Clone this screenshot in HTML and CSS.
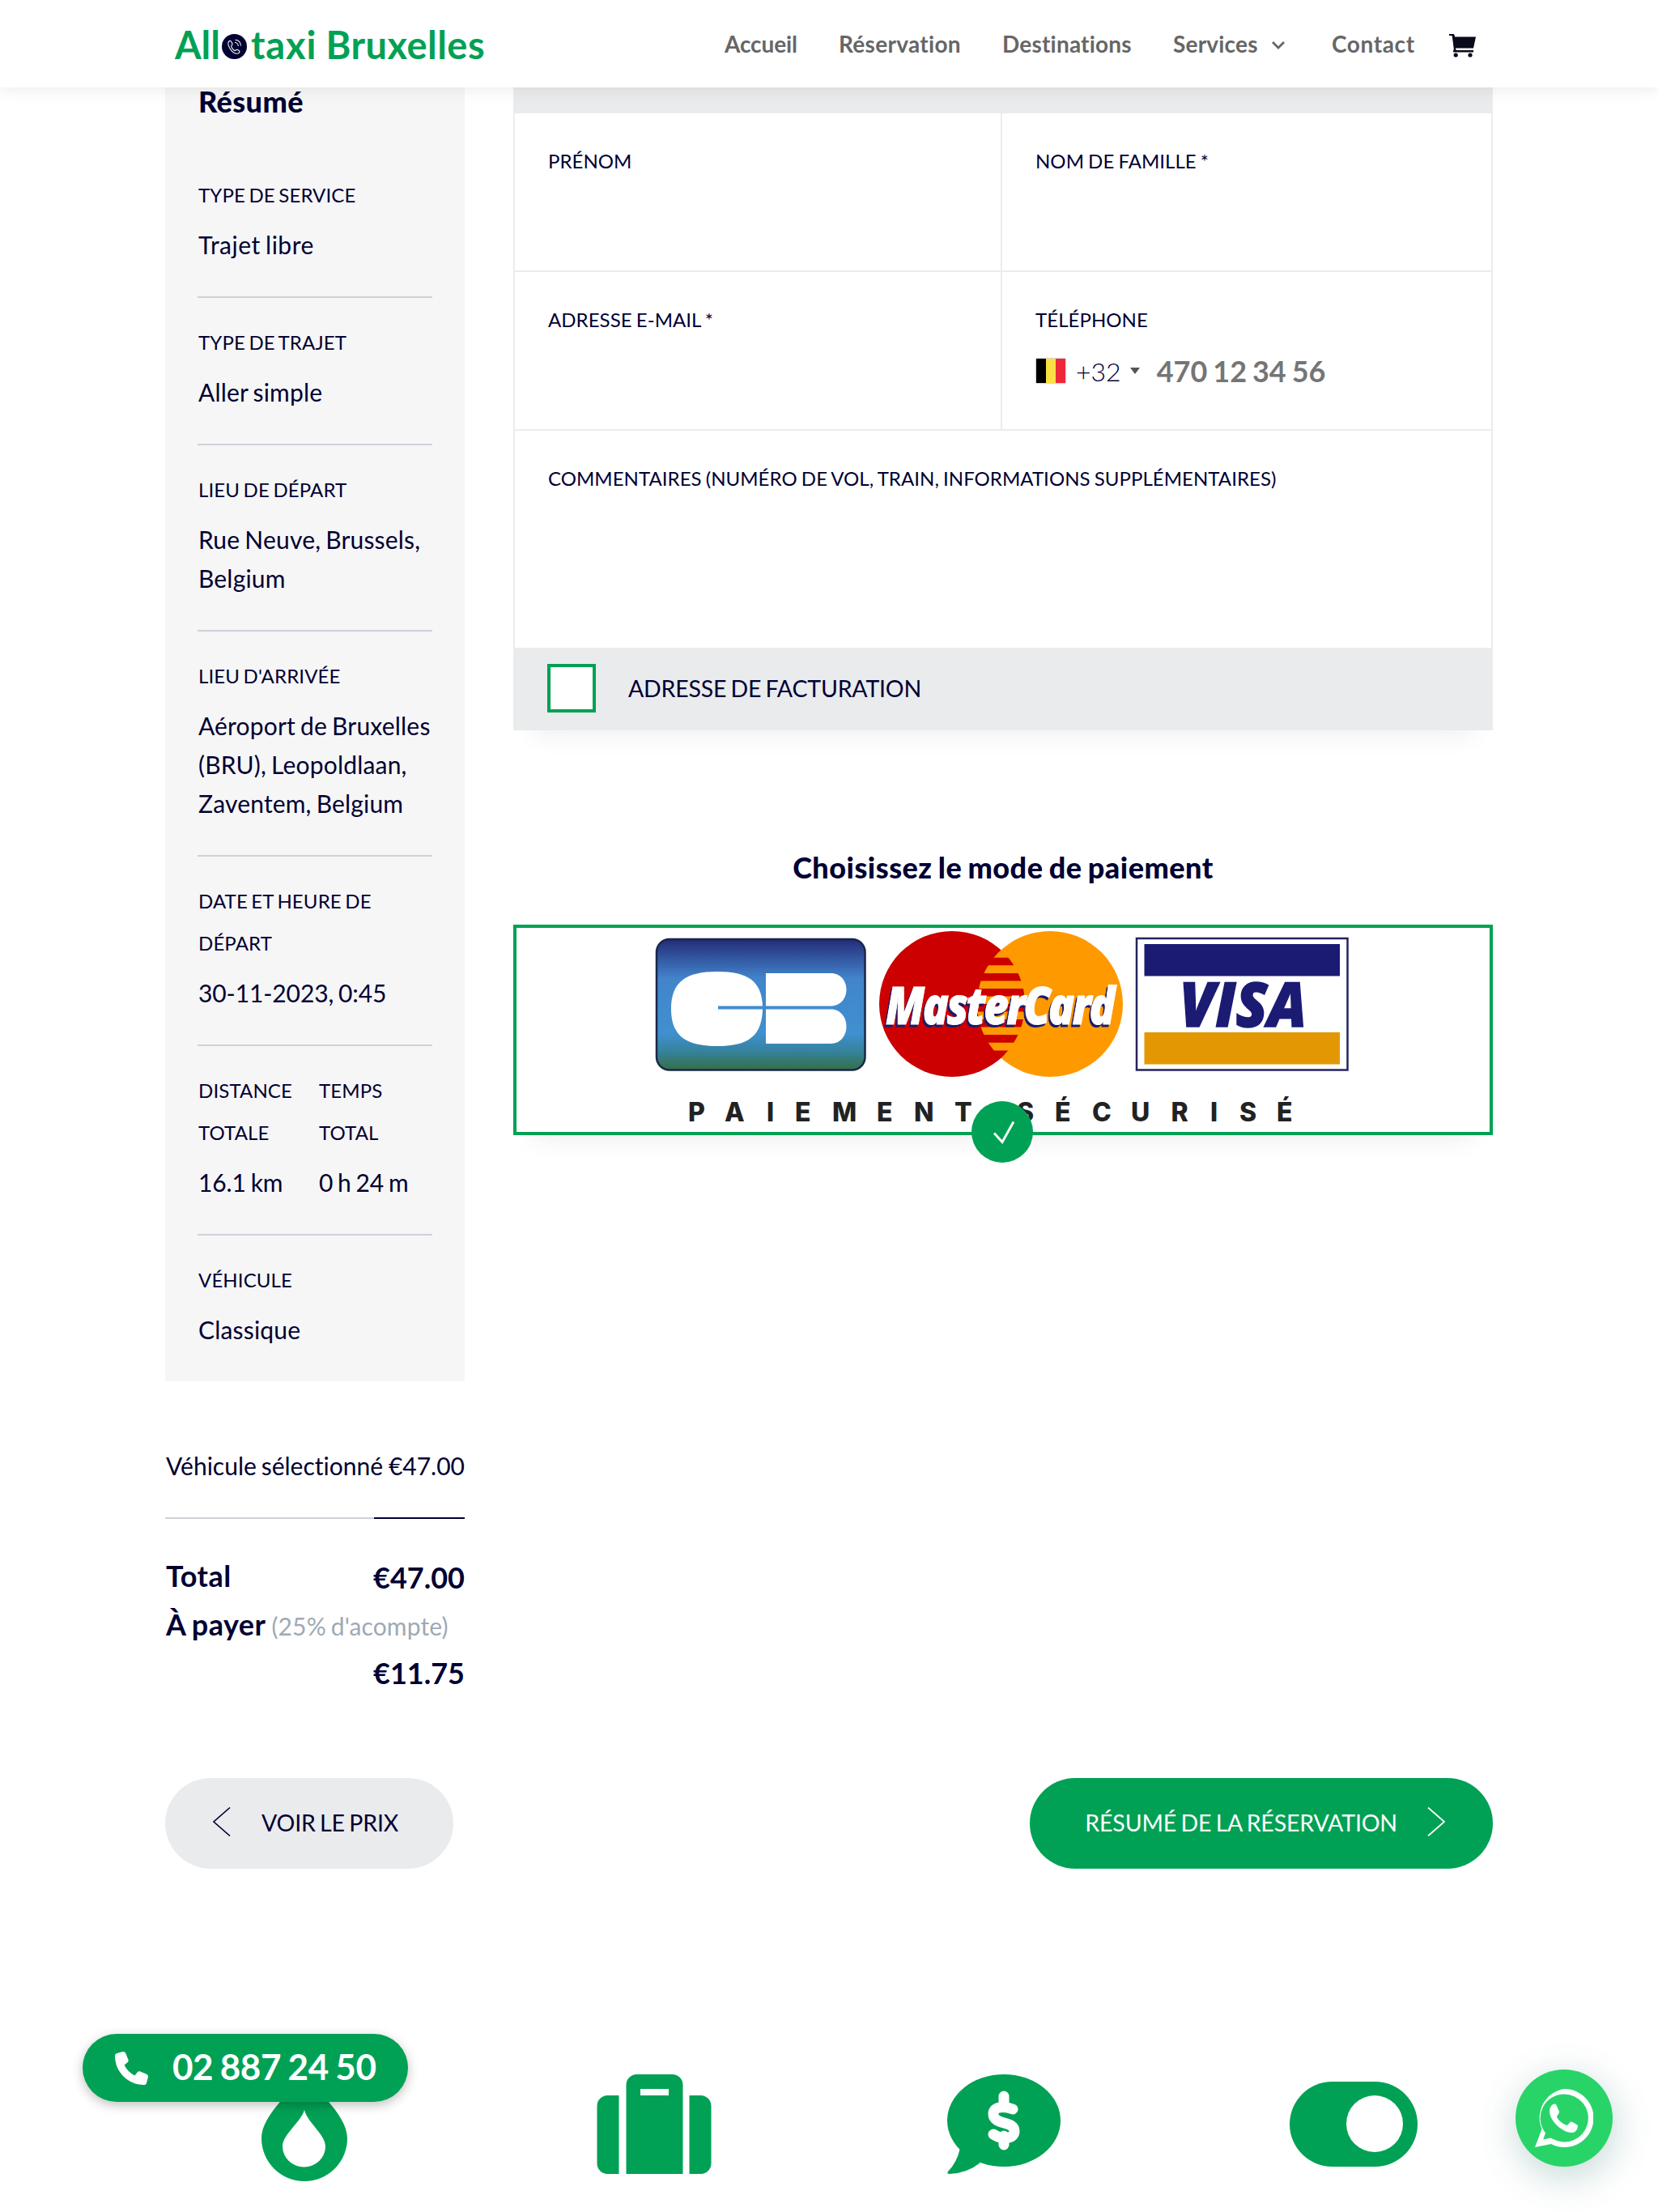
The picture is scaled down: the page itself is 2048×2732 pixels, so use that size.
FILE: index.html
```html
<!DOCTYPE html>
<html lang="fr">
<head>
<meta charset="utf-8">
<title>Allo taxi Bruxelles</title>
<link rel="stylesheet" href="styles.css">
</head>
<body>
<header class="topbar">
  <a class="logo"><span class="logo-all">All</span><svg class="logo-o" viewBox="0 0 31 31"><circle cx="15.500" cy="15.500" r="15.500" fill="#003"/><path d="M9.500 8.500c-2.200 1.300-2.200 4.500 0 8.500 2.500 4.300 6 7.200 9 7.200 2.200 0 3.700-1.400 3.400-2.600-.3-1.100-2.400-2.500-3.500-2.300-1 .2-1.500 1.600-2.500 1.300-1.600-.6-4-3.600-4.200-5.400-.1-1.200 1.200-1.500 1.300-2.500.1-1.400-1.800-5.100-3.500-4.200zM16 10.500c2.500 0 4.300 2 4.300 4.500M16.500 7.300c4 0 7 3.200 7 7.200" fill="none" stroke="#fff" stroke-width="1.100"/></svg><span class="logo-taxi">taxi</span><span class="logo-brux">Bruxelles</span></a>
  <nav class="nav">
    <a class="n1">Accueil</a>
    <a class="n2">Réservation</a>
    <a class="n3">Destinations</a>
    <a class="n4">Services</a>
    <svg class="caret" viewBox="0 0 18 12"><path d="M2 2l7 7 7-7" fill="none" stroke="#666" stroke-width="2.800"/></svg>
    <a class="n5">Contact</a>
    <svg class="cart" viewBox="0 0 34 30"><path d="M0 1h6l1.200 3.500H33L30 18.500H8l.6 2.500H30v2.600H4.800l1-4L3.800 4 3.200 3H0z" fill="#0a0a1c"/><circle cx="8.200" cy="27" r="2.600" fill="#0a0a1c"/><circle cx="26" cy="27" r="2.600" fill="#0a0a1c"/></svg>
  </nav>
</header>

<main class="booking">
  <aside class="side">
    <section class="summary">
      <h2 class="summary-title">Résumé</h2>
      <div class="item"><div class="label">TYPE DE SERVICE</div><div class="value loose">Trajet libre</div></div>
      <div class="item"><div class="label">TYPE DE TRAJET</div><div class="value">Aller simple</div></div>
      <div class="item"><div class="label">LIEU DE DÉPART</div><div class="value">Rue Neuve, Brussels,<br>Belgium</div></div>
      <div class="item"><div class="label">LIEU D'ARRIVÉE</div><div class="value">Aéroport de Bruxelles<br>(BRU), Leopoldlaan,<br>Zaventem, Belgium</div></div>
      <div class="item"><div class="label">DATE ET HEURE DE<br>DÉPART</div><div class="value digits">30-11-2023, 0:45</div></div>
      <div class="item pair">
        <div><div class="label">DISTANCE<br>TOTALE</div><div class="value digits">16.1 km</div></div>
        <div><div class="label">TEMPS<br>TOTAL</div><div class="value digits">0 h 24 m</div></div>
      </div>
      <div class="item"><div class="label">VÉHICULE</div><div class="value">Classique</div></div>
    </section>
    <section class="prices">
      <div class="price-row"><span>Véhicule sélectionné</span><span>€47.00</span></div>
      <div class="price-line"><i></i></div>
      <div class="total"><span class="name">Total</span><span class="sum">€47.00</span></div>
      <div class="due"><span class="name">À payer</span> <small>(25% d'acompte)</small></div>
      <div class="due-sum">€11.75</div>
    </section>
  </aside>

  <div class="content">
    <section class="form">
      <div class="form-head"></div>
      <div class="form-grid">
        <div class="cell"><label>PRÉNOM</label></div>
        <div class="cell"><label>NOM DE FAMILLE *</label></div>
        <div class="cell"><label>ADRESSE E-MAIL *</label></div>
        <div class="cell"><label>TÉLÉPHONE</label>
          <div class="phone">
            <svg class="flag" viewBox="0 0 36 30"><path d="M0 0h12v30H0z"/><path d="M12 0h12v30H12z" fill="#fae042"/><path d="M24 0h12v30H24z" fill="#ed2939"/></svg>
            <span class="dial">+32</span>
            <svg class="tri" viewBox="0 0 12 8"><path d="M0 0h12L6 8z" fill="#555"/></svg>
            <span class="number">470 12 34 56</span>
          </div>
        </div>
        <div class="cell wide"><label>COMMENTAIRES (NUMÉRO DE VOL, TRAIN, INFORMATIONS SUPPLÉMENTAIRES)</label></div>
      </div>
      <div class="billing"><i class="check"></i><span>ADRESSE DE FACTURATION</span></div>
    </section>

    <h3 class="pay-title">Choisissez le mode de paiement</h3>
    <div class="pay">
      <svg class="cards" viewBox="638 1146 1202 252">
        <defs>
          <linearGradient id="cb" x1="0" y1="0" x2="0" y2="1"><stop offset="0" stop-color="#232c78"/><stop offset=".3" stop-color="#4284cb"/><stop offset=".72" stop-color="#4090cf"/><stop offset=".86" stop-color="#35829c"/><stop offset="1" stop-color="#356f45"/></linearGradient>
          <clipPath id="lens"><circle cx="1176" cy="1240" r="90"/></clipPath>
        </defs>
        <rect x="811" y="1160" width="257.500" height="161.500" rx="16" fill="url(#cb)" stroke="#1a2748" stroke-width="2.500"/>
        <path d="M887 1242.500H942C941 1212 924 1200 886 1200S829 1212 829 1246s19 46 57 46 55-12 56-45.500H887z" fill="#fff"/>
        <path d="M946 1202h80c26 0 26 40.500 0 40.500H946zM946 1246.500h80c26 0 26 42.500 0 42.500H946z" fill="#fff"/>
        <circle cx="1176" cy="1240" r="90" fill="#c00"/>
        <circle cx="1297" cy="1240" r="90" fill="#f90"/>
        <g clip-path="url(#lens)" fill="#c00"><path d="M1222 1182.700h29l4 9.500h-35zM1214 1202h46l2 9.500h-51zM1209 1221h56v9.500h-57zM1208 1240h57v9.500h-57zM1209 1259h56v9.500h-55zM1214 1278h45l-3 9.700h-38zM1226 1297.500h20l-9 12z"/></g>
        <g class="mc"><text x="1092" y="1268" textLength="281" lengthAdjust="spacingAndGlyphs" fill="#1a1a6a" stroke="#1a1a6a">MasterCard</text><text x="1094" y="1265" textLength="281" lengthAdjust="spacingAndGlyphs" fill="#fff" stroke="#fff">MasterCard</text></g>
        <rect x="1404" y="1159" width="260.500" height="162.500" fill="#fff" stroke="#23235f" stroke-width="2.500"/>
        <path d="M1413.500 1166H1655v39.500h-241.500z" fill="#1b1b74"/><path d="M1413.500 1275H1655v39.500h-241.500z" fill="#e39803"/>
        <text class="visa" x="1457" y="1268" textLength="157" lengthAdjust="spacingAndGlyphs">VISA</text>
        <text class="secure" y="1385" x="850 895 947 982 1028 1083 1129 1179 1210 1256 1303 1349 1397 1446.500 1495 1531 1577">PAIEMENT SÉCURISÉ</text>
      </svg>
      <span class="tick"><svg viewBox="0 0 76 76"><path d="M28 39.500l10 11 14-25" fill="none" stroke="#fff" stroke-width="2.800"/></svg></span>
    </div>
  </div>
</main>

<div class="actions">
  <a class="btn back"><svg viewBox="0 0 22 36"><path d="M21 .5L1 18l20 17.500" fill="none" stroke="#003" stroke-width="1.600"/></svg><span>VOIR LE PRIX</span></a>
  <a class="btn next"><span>RÉSUMÉ DE LA RÉSERVATION</span><svg viewBox="0 0 22 36"><path d="M1 .5L21 18 1 35.500" fill="none" stroke="#fff" stroke-width="1.800"/></svg></a>
</div>

<section class="features">
  <svg viewBox="0 0 160 140"><path d="M80 1c8 22 53 54 53 85a53 53 0 0 1-106 0C27 55 72 23 80 1z"/><path d="M80 51c-5 16-27 30-27 45a26.500 25.500 0 0 0 53 0c0-15-22-29-26-45z" fill="#fff"/></svg>
  <svg viewBox="0 0 160 140"><path d="M46 33v97H32a13 13 0 0 1-13-13V46a13 13 0 0 1 13-13zM133 33h14a13 13 0 0 1 13 13v71a13 13 0 0 1-13 13h-14zM55 130V20A13 13 0 0 1 68 7h44a13 13 0 0 1 13 13v110z" transform="translate(-9.500 0)"/><path d="M63 25h35v8H63z" fill="#fff"/></svg>
  <svg viewBox="0 0 160 140"><ellipse cx="80" cy="64" rx="70" ry="57"/><path d="M26 98q-4 18-15 29-2 3 2 3 22-1 38-14z"/><path d="M80 34v11M80 83v11" fill="none" stroke="#fff" stroke-width="13" stroke-linecap="round"/><path d="M91 50c-8-3-24-5-24 6 0 14 26 8 26 21 0 11-17 10-26 4" fill="none" stroke="#fff" stroke-width="13" stroke-linecap="round"/></svg>
  <svg viewBox="0 0 160 140"><rect x="1" y="16" width="158" height="105" rx="52.500"/><circle cx="106" cy="68" r="35" fill="#fff"/></svg>
</section>

<a class="call"><svg viewBox="0 0 512 512"><path fill="#fff" d="M164.900 24.600c-7.700-18.600-28-28.500-47.400-23.200l-88 24C12.100 30.200 0 46 0 64c0 247.400 200.600 448 448 448 18 0 33.800-12.100 38.600-29.500l24-88c5.300-19.400-4.600-39.700-23.200-47.400l-96-40c-16.300-6.800-35.200-2.100-46.300 11.600L304.700 368C234.300 334.700 177.300 277.700 144 207.300L193.300 167c13.700-11.200 18.400-30 11.600-46.300l-40-96z"/></svg><span>02 887 24 50</span></a>
<a class="whatsapp"><svg viewBox="0 0 72 72"><path d="M36 0a36 36 0 1 1-16 68L0 72l8.500-22.500A36 36 0 0 1 36 0zm0 6.500A29.500 29.500 0 0 0 12 53l1 1.500-2.800 8 9.300-2 2 1A29.500 29.500 0 1 0 36 6.500z" fill="#fff" fill-rule="evenodd"/><path d="M26 19l4 9c.6 2-3 5-3 6.500 2 5 8 9 12.500 10.500 1.500 0 3.500-4.500 5-4.500 1.500 0 8 3.500 8.500 5 0 3-2 7.500-5.500 8.300-10 2.200-29-12-29.500-26 0-4 2-8 5-9 1-.3 2.500-.3 3 .2z" fill="#fff"/></svg></a>
</body>
</html>
```
FILE: styles.css
```css
* { box-sizing: border-box; }
body {
  margin: 0;
  width: 2048px;
  height: 2732px;
  overflow: hidden;
  position: relative;
  background: #fff;
  color: #003;
  font-family: Lato, "Liberation Sans", sans-serif;
  font-size: 30px;
  font-variant-ligatures: none;
  word-spacing: -.06em;
}
svg { display: block; flex: none; }
h2, h3 { margin: 0; }

.topbar {
  position: relative;
  z-index: 2;
  display: flex;
  justify-content: space-between;
  height: 108px;
  padding: 0 224px 0 216px;
  background: #fff;
  box-shadow: 0 0 20px rgba(0, 0, 0, .1);
}
.logo {
  display: flex;
  color: #00a154;
  font-size: 47px;
  font-weight: 700;
  line-height: 110px;
}
.logo-o { width: 31px; height: 31px; margin: 42px 5px 0 2px; }
.logo-taxi { letter-spacing: .9px; }
.logo-brux { margin-left: 11px; letter-spacing: .5px; }
.nav {
  display: flex;
  color: #666;
  font-size: 28px;
  font-weight: 700;
  line-height: 108px;
}
.n1 { width: 141px; letter-spacing: -.1px; }
.n2 { width: 202px; letter-spacing: .3px; }
.n3 { width: 211px; letter-spacing: .2px; }
.n4 { width: 121px; letter-spacing: .2px; }
.n5 { width: 102px; letter-spacing: .6px; }
.caret { width: 18px; height: 12px; margin: 50px 57px 0 0; }
.cart { width: 34px; height: 30px; margin: 41px 0 0 43px; }

.booking {
  display: flex;
  gap: 60px;
  width: 1640px;
  height: 2088px;
  margin-left: 204px;
}
.side { width: 370px; }
.summary { height: 1598px; padding: 0 40px; background: #f6f6f6; }
.summary-title {
  height: 78px;
  padding-left: 1px;
  font-size: 36px;
  font-weight: 900;
  line-height: 34px;
  letter-spacing: .4px;
}
.item { padding: 29px 0 40px; border-bottom: 2px solid #cdd2da; }
.item:last-child { border: 0; }
.label, .value { padding-left: 1px; }
.label { margin-bottom: 11px; font-size: 24px; line-height: 52px; letter-spacing: .13px; }
.value { line-height: 48px; letter-spacing: .18px; white-space: nowrap; }
.value.loose { letter-spacing: .5px; }
.value.digits { letter-spacing: -.1px; }
.pair { display: grid; grid-template-columns: 149px 1fr; }

.prices { padding-top: 78px; }
.price-row {
  display: flex;
  justify-content: space-between;
  padding-left: 1px;
  line-height: 52px;
  white-space: nowrap;
}
.price-line { margin-top: 38px; height: 2px; background: #cdd2da; }
.price-line i { display: block; width: 112px; height: 2px; margin-left: auto; background: #003; }
.total {
  display: flex;
  justify-content: space-between;
  margin-top: 40px;
  font-size: 36px;
  font-weight: 700;
  line-height: 60px;
}
.name { padding-left: 1px; letter-spacing: .5px; }
.sum { padding-top: 2px; }
.due { margin-top: -2px; font-size: 36px; font-weight: 700; line-height: 60px; white-space: nowrap; }
.due small { color: #9ea9b5; font-size: 30px; font-weight: 400; letter-spacing: .12px; }
.due-sum { margin-top: -2px; font-size: 36px; font-weight: 700; line-height: 60px; text-align: right; }

.content { width: 1210px; }
.form { height: 794px; box-shadow: 0 30px 30px -25px rgba(0, 0, 0, .07); }
.form-head { height: 32px; background: #eaebed; }
.form-grid {
  display: grid;
  grid-template-columns: 602px 1fr;
  grid-template-rows: 196px 196px 268px;
  border: solid #ebeced;
  border-width: 0 2px;
}
.cell { padding: 32px 40px 0 41px; border-bottom: 2px solid #ebeced; }
.cell:nth-child(odd) { border-right: 2px solid #ebeced; }
.cell.wide { grid-column: 1 / 3; border: 0; }
.cell label {
  display: block;
  width: max-content;
  font-size: 24px;
  line-height: 54px;
  letter-spacing: .05px;
  word-spacing: -.045em;
}
.phone { display: flex; align-items: center; height: 50px; margin-top: 11px; }
.flag { width: 36px; height: 30px; margin: 0 0 0 1px; box-shadow: 0 0 2px #888; }
.dial { margin-left: 13px; font-size: 32px; font-weight: 300; }
.tri { width: 12px; height: 8px; margin-left: 11px; }
.number { margin-left: 21px; color: #757575; font-size: 36px; font-weight: 700; }
.billing {
  display: flex;
  align-items: center;
  height: 102px;
  padding: 0 0 2px 42px;
  background: #eaebed;
  font-size: 28.500px;
  letter-spacing: -.2px;
}
.check { width: 60px; height: 60px; margin-right: 40px; border: 4px solid #00a154; background: #fff; }

.pay-title {
  height: 102px;
  margin-top: 138px;
  font-size: 36px;
  font-weight: 900;
  line-height: 62px;
  letter-spacing: .5px;
  text-align: center;
}
.pay { position: relative; height: 260px; border: 4px solid #00a154; box-shadow: 0 30px 30px -25px rgba(0, 0, 0, .07); }
.cards { width: 1202px; height: 252px; }
.cards text { font-family: "Open Sans", sans-serif; font-weight: 800; font-style: italic; }
.mc text { font-size: 64px; letter-spacing: -3px; stroke-width: 1px; }
.cards .visa { font-size: 76px; fill: #1b1b74; stroke: #1b1b74; stroke-width: 1.500px; }
.cards .secure { font-family: Inter, sans-serif; font-size: 32px; font-weight: 800; font-style: normal; word-spacing: 0; fill: #222; }
.tick { position: absolute; left: 562px; top: 214px; width: 76px; height: 76px; border-radius: 50%; background: #00a154; }

.actions { display: flex; justify-content: space-between; width: 1640px; margin-left: 204px; }
.btn { display: flex; align-items: center; height: 112px; border-radius: 56px; font-size: 28.500px; letter-spacing: -.15px; }
.btn span { margin-bottom: 3px; }
.btn svg { width: 22px; height: 36px; margin-bottom: 4px; }
.back { width: 356px; padding-left: 59px; gap: 38px; background: #eaebed; }
.next { justify-content: flex-end; width: 572px; padding-right: 59px; gap: 37px; background: #00a154; color: #fff; }

.features { display: flex; gap: 272px; margin: 247px 0 0 296px; fill: #00a154; }
.features svg { width: 160px; height: 140px; }

.call {
  position: absolute;
  left: 102px;
  top: 2512px;
  display: flex;
  align-items: center;
  width: 402px;
  height: 84px;
  padding-left: 40px;
  gap: 30px;
  border-radius: 42px;
  background: #00a154;
  box-shadow: 0 4px 14px rgba(0, 0, 0, .25);
  color: #fff;
  font-size: 44px;
  font-weight: 700;
  letter-spacing: -.4px;
}
.call span { margin-bottom: 5px; }
.call svg { width: 41px; height: 41px; }
.whatsapp {
  position: absolute;
  left: 1872px;
  top: 2556px;
  width: 120px;
  height: 120px;
  padding: 24px;
  border-radius: 50%;
  background: #28d468;
  box-shadow: 2px 12px 48px rgba(7, 94, 84, .24);
}
.whatsapp svg { width: 72px; height: 72px; }
```
